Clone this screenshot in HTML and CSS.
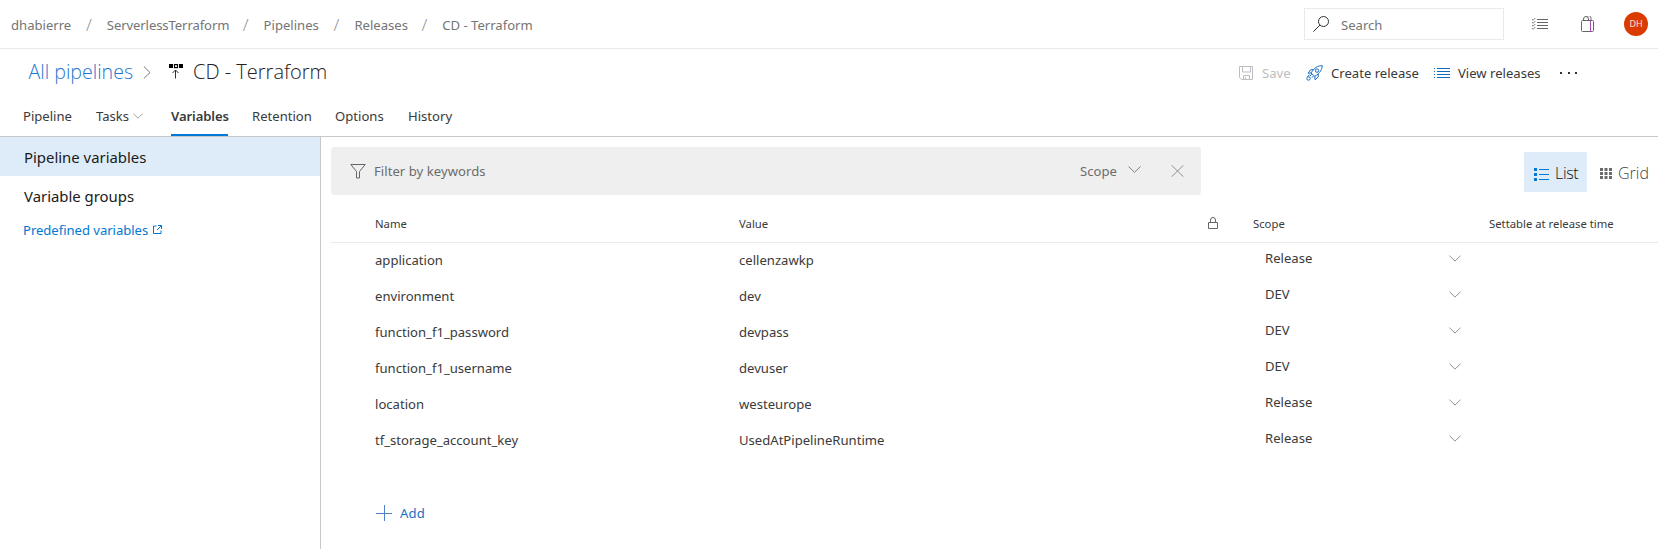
FILE: index.html
```html
<!DOCTYPE html>
<html lang="en">
<head>
<meta charset="utf-8">
<title>CD - Terraform - Pipelines</title>
<link rel="stylesheet" href="styles.css">
</head>
<body>
<svg class="defs" width="0" height="0">
  <symbol id="chev" viewBox="0 0 13 7"><path d="M.5 .5 6.5 6.3 12.5 .5" fill="none" stroke="currentColor"/></symbol>
</svg>
<header class="topbar">
  <nav class="crumbs">
    <span class="c1">dhabierre</span><i>/</i><span class="c2">ServerlessTerraform</span><i>/</i><span class="c3">Pipelines</span><i>/</i><span class="c4">Releases</span><i>/</i><span class="c5">CD - Terraform</span>
  </nav>
  <div class="search">
    <svg width="16" height="16" viewBox="0 0 16 16"><g fill="none" stroke="#333"><circle cx="10.5" cy="5.5" r="5"/><path d="M7 9 .4 15.6"/></g></svg>
    <span>Search</span>
  </div>
  <svg class="worklist" width="16" height="12" viewBox="0 0 16 12"><g fill="none" stroke="#666"><path d="M5 1.5h11M5 4.5h11M5 7.5h11M5 10.5h11"/><path d="M0 1.2l1.2 1L3.3 0M0 4.2l1.2 1L3.3 3M0 7.2l1.2 1L3.3 6M0 10.2l1.2 1L3.3 9" stroke-width=".8"/></g></svg>
  <svg class="bag" width="13" height="16" viewBox="0 0 13 16"><g fill="none" stroke="#666"><rect x=".5" y="4.500" width="12" height="11" rx="1"/><path d="M2.500 4.500V3a2.500 2.500 0 0 1 5 0v1.500M5.500 .8a2.500 2.500 0 0 1 4.500 2v1.700"/><path d="M9.500 4.500v11" stroke="#a24cb0"/></g></svg>
  <span class="avatar">DH</span>
</header>

<div class="titlebar">
  <a class="all">All pipelines</a>
  <svg class="sep" width="8" height="13" viewBox="0 0 8 13"><path d="M.8 .5 7 6.500.8 12.500" fill="none" stroke="#777"/></svg>
  <svg class="rel" width="14" height="15" viewBox="0 0 14 15"><path d="M0 0h4v4H0zM10 0h4v4h-4z" fill="#000"/><rect x="5.500" y=".6" width="3" height="3" fill="none" stroke="#000" stroke-width="1.200"/><path d="M6.500 14.500V6M3.500 9l3-3 3 3" fill="none" stroke="#333"/></svg>
  <h1>CD - Terraform</h1>
  <div class="actions">
    <svg class="i-save" width="14" height="14" viewBox="0 0 14 14"><path d="M.5 .5h13v13h-11l-2-2zM3.500 .5v5.500h8V.5M4.500 13.500v-4h6v4M6.500 11v2.500" fill="none" stroke="#bdbdbd"/></svg>
    <span class="save">Save</span>
    <svg class="i-rocket" width="17" height="16" viewBox="0 0 17 16"><g fill="none" stroke="#1a6fc4"><path d="M16.300.6C12 .6 8.500 2.500 5 8l3.800 3.400C14.200 8 16 4.500 16.300.6z"/><circle cx="11" cy="5.600" r="1.700"/><path d="M7.600 4.600 4.600 4.800 2 8.200l3-.2M12.300 8.800v3L9 14.800l-.2-3.400M5.800 9.200 4 11M7.600 10.800 6 12.600"/><circle cx="2.500" cy="13.500" r="1.700"/><path d="M1.600 11.900 3.400 9.600"/></g></svg>
    <span class="create">Create release</span>
    <svg class="i-view" width="16" height="11" viewBox="0 0 16 11"><path d="M3 .5h13M3 3.500h13M3 6.500h13M3 9.500h13M0 .5h1M0 3.500h1M0 6.500h1M0 9.500h1" stroke="#0f6cbd"/></svg>
    <span class="view">View releases</span>
    <svg class="i-more" width="18" height="2" viewBox="0 0 18 2"><path d="M0 1h2M8 1h2M15 1h2" stroke="#333" stroke-width="2"/></svg>
  </div>
</div>

<nav class="tabs">
  <a class="t1">Pipeline</a>
  <a class="t2">Tasks</a><svg class="t2c" width="10" height="6"><use href="#chev"/></svg>
  <a class="t3">Variables</a>
  <a class="t4">Retention</a>
  <a class="t5">Options</a>
  <a class="t6">History</a>
</nav>

<div class="body">
  <aside>
    <a class="side on"><span class="pv">Pipeline variables</span></a>
    <a class="side"><span class="vg">Variable groups</span></a>
    <a class="predef"><span>Predefined variables</span>
      <svg width="9" height="9" viewBox="0 0 9 9"><path d="M3.500 1H.5v7.500h7.500V5.500M5 .5h3.500V4M8.500 .5 4 5" fill="none" stroke="#0078d4"/></svg></a>
  </aside>
  <main>
    <div class="tools">
      <div class="filter">
        <svg width="16" height="15" viewBox="0 0 16 15"><path d="M.8 .5h14.400L9.500 7.500v6.500h-3V7.500z" fill="none" stroke="#666"/></svg>
        <span class="kw">Filter by keywords</span>
        <span class="fscope">Scope</span>
        <svg class="fc" width="13" height="7"><use href="#chev"/></svg>
        <svg class="fx" width="13" height="12" viewBox="0 0 13 12"><path d="M.5 .2 12.500 11.800M12.500 .2.5 11.800" stroke="#909090"/></svg>
      </div>
      <div class="btn on"><svg width="15" height="13" viewBox="0 0 15 13"><path d="M0 0h3v3H0zM0 5h3v3H0zM0 10h3v3H0zM5 1h10v1H5zM5 6h10v1H5zM5 11h10v1H5z" fill="#0078d4"/></svg><span class="bl">List</span></div>
      <div class="btn"><svg width="12" height="11" viewBox="0 0 12 11"><path d="M0 0h3v3H0zM4.500 0h3v3h-3zM9 0h3v3H9zM0 4h3v3H0zM4.500 4h3v3h-3zM9 4h3v3H9zM0 8h3v3H0zM4.500 8h3v3h-3zM9 8h3v3H9z" fill="#6a6a6a"/></svg><span class="bg">Grid</span></div>
    </div>
    <div class="row head">
      <span class="h1">Name</span><span class="h2">Value</span>
      <svg width="10" height="12" viewBox="0 0 10 12"><path d="M.5 5.500h9v6h-9zM2.500 5.500V3a2.500 2.500 0 0 1 5 0v2.500" fill="none" stroke="#666"/></svg>
      <span class="h3">Scope</span><span class="h4">Settable at release time</span>
    </div>
    <div class="row"><span>application</span><span>cellenzawkp</span><i></i><span class="sc">Release</span><svg width="12" height="7"><use href="#chev"/></svg></div>
    <div class="row"><span>environment</span><span>dev</span><i></i><span class="sc">DEV</span><svg width="12" height="7"><use href="#chev"/></svg></div>
    <div class="row"><span>function_f1_password</span><span>devpass</span><i></i><span class="sc">DEV</span><svg width="12" height="7"><use href="#chev"/></svg></div>
    <div class="row"><span>function_f1_username</span><span>devuser</span><i></i><span class="sc">DEV</span><svg width="12" height="7"><use href="#chev"/></svg></div>
    <div class="row"><span>location</span><span>westeurope</span><i></i><span class="sc">Release</span><svg width="12" height="7"><use href="#chev"/></svg></div>
    <div class="row"><span>tf_storage_account_key</span><span>UsedAtPipelineRuntime</span><i></i><span class="sc">Release</span><svg width="12" height="7"><use href="#chev"/></svg></div>
    <div class="add"><svg width="16" height="16" viewBox="0 0 16 16"><path d="M0 8.500h16M8.500 0v16" stroke="#4f7fc8"/></svg><span>Add</span></div>
  </main>
</div>
</body>
</html>
```

FILE: styles.css
```css
* { box-sizing: border-box; }
body {
  margin: 0;
  width: 1658px;
  height: 549px;
  overflow: hidden;
  background: #fff;
  color: #3a3a3a;
  font: 13.1px/20px "Noto Sans", "Open Sans", sans-serif;
  white-space: nowrap;
}
svg { display: block; flex: none; }
.defs { position: absolute; }

/* top bar */
.topbar { display: flex; height: 49px; border-bottom: 1px solid #eaeaea; }
.crumbs { display: flex; width: 1304px; padding: 15px 0 0 11px; color: #757575; }
.crumbs i { width: 35.8px; text-align: center; font: 300 17px/19px "Open Sans", sans-serif; color: #888; }
.c1 { width: 60px; }
.c2 { width: 121px; letter-spacing: -.1px; }
.c3 { width: 55px; }
.c4 { width: 52px; }
.search { display: flex; width: 200px; height: 32px; margin-top: 8px; border: 1px solid #eaeaea; padding: 7px 8px; color: #757575; }
.search span { margin: -1px 0 0 12px; }
.worklist { margin: 18px 0 0 28px; }
.bag { margin: 16px 0 0 33px; }
.avatar { width: 24px; height: 24px; margin: 12px 0 0 30px; border-radius: 50%; background: #da3b01; color: #fbe3da; font-size: 9px; line-height: 24px; text-align: center; }

/* title */
.titlebar { display: flex; height: 53px; padding: 11px 0 0 28.5px; }
.all { width: 103.5px; font: 300 19.6px/24px "Open Sans", sans-serif; color: #1c78d0; }
.sep { margin: 6px 0 0 11px; }
.rel { margin: 4px 0 0 18px; }
h1 { width: 138px; margin: 0 0 0 10px; font: 350 20px/24px "Open Sans", sans-serif; color: #222; }
.actions { display: flex; margin: 3px 0 0 908px; line-height: 20px; }
.i-save { margin-top: 3px; }
.save { width: 29px; margin-left: 9px; color: #bdbdbd; }
.i-rocket { margin: 2px 0 0 15px; }
.create { width: 88px; margin-left: 8px; }
.i-view { margin: 5px 0 0 15px; }
.view { width: 84px; margin-left: 8px; }
.i-more { margin: 9px 0 0 18px; }

/* tabs */
.tabs { display: flex; height: 35px; padding: 4px 0 0 23px; border-bottom: 1px solid #c8c8c8; }
.tabs a { height: 30px; }
.t1 { width: 50px; }
.t2 { width: 32px; margin-left: 23px; }
.t2c { margin: 7px 0 0 5px; color: #888; }
.t3 { width: 57px; margin-left: 28px; font-weight: 600; letter-spacing: -.1px; border-bottom: 2px solid #0078d4; }
.t4 { width: 60px; margin-left: 24px; }
.t5 { width: 50px; margin-left: 23px; }
.t6 { width: 45px; margin-left: 23px; }

/* body */
.body { display: flex; height: 412px; }
aside { width: 321px; border-right: 1px solid #c8c8c8; }
.side { display: block; height: 39px; padding: 10px 0 0 24px; font-size: 14.9px; color: #1a1a1a; }
.on { background: #deecf9; }
.predef { display: flex; padding: 5px 0 0 23px; color: #0078d4; }
.predef span { width: 125px; letter-spacing: -.04px; }
.predef svg { margin: 5px 0 0 5px; }

main { width: 1337px; padding: 10px 0 0 10px; }
.tools { display: flex; height: 64px; }
.filter { display: flex; width: 870px; height: 48px; padding: 14px 0 0 19px; background: #efefef; border-radius: 4px; color: #6c6c6c; }
.filter > svg:first-child { margin-top: 3px; }
.kw { width: 706px; margin-left: 8px; letter-spacing: .04px; }
.fscope { width: 39px; }
.fc { margin: 5px 0 0 9px; color: #808080; }
.fx { margin: 4px 0 0 30px; }
.btn { display: flex; height: 40px; margin-top: 5px; font: 300 16px/24px "Open Sans", sans-serif; color: #111; }
.btn.on { width: 63px; margin-left: 323px; padding: 8px 0 0 10px; }
.btn svg { margin-top: 8px; }
.btn span { margin: 1px 0 0 6px; }
.btn .bl { letter-spacing: -.3px; }
.btn:not(.on) { margin-left: 13px; padding-top: 8px; color: #444; }

.row { display: grid; grid-template-columns: 364px 469px 57px 184px 1fr; height: 36px; padding-left: 44px; }
.row > * { margin-top: 7px; }
.row .sc { margin-top: 5px; }
.row svg { margin-top: 12px; color: #888; }
.head { height: 32px; grid-template-columns: 364px 469px 45px 236px 1fr; font-size: 11.300px; border-bottom: 1px solid #eaeaea; }
.head > * { margin-top: 3px; }
.head svg { margin-top: 6px; }
.add { display: flex; margin-top: 46px; padding-left: 45px; color: #1a6fc4; }
.add span { margin: -2px 0 0 8px; letter-spacing: .2px; }
```
